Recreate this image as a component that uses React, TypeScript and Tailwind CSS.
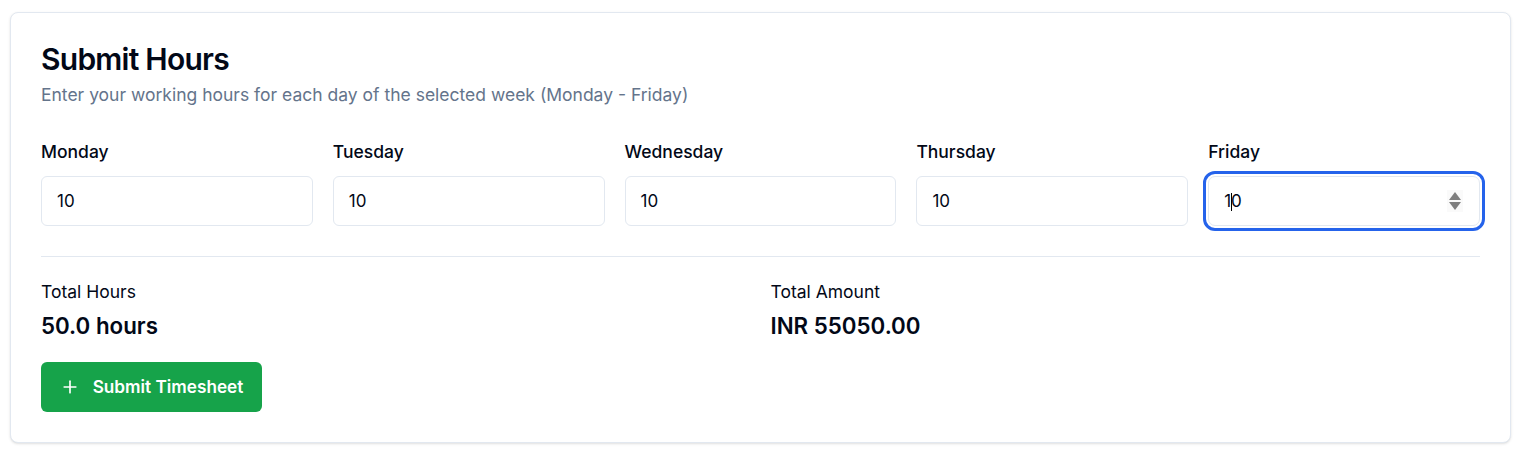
import React from "react";

const days = ["Monday", "Tuesday", "Wednesday", "Thursday", "Friday"];

export default function App() {
  return (
    <div className="min-h-screen bg-white pt-[12px] pl-[10px]" style={{ fontFamily: "Inter, 'Noto Sans', sans-serif" }}>
      <div className="w-[1501px] rounded-lg border border-[#e2e8f0] bg-white px-[30px] pt-[28px] pb-[30px] shadow-sm">
        <h1 className="text-[30px] font-semibold leading-[36px] tracking-[-0.75px] text-[#020817]">Submit Hours</h1>
        <p className="mt-[6px] text-[17.5px] leading-[24px] text-[#64748b]">
          Enter your working hours for each day of the selected week (Monday - Friday)
        </p>
        <div className="mt-[33px] grid grid-cols-5 gap-[20px]">
          {days.map((d) => {
            const focused = d === "Friday";
            return (
              <div key={d} className="flex flex-col gap-[12px]">
                <label className="text-[17.5px] font-medium leading-[24px] text-[#020817]">{d}</label>
                <div
                  className={
                    focused
                      ? "flex h-[50px] items-center rounded-[7px] border border-[#e2e8f0] pl-[15px] pr-[16px] pt-[2px] outline outline-[3px] outline-offset-[2px] outline-[#2563eb]"
                      : "flex h-[50px] items-center rounded-md border border-[#e2e8f0] px-[15px] pt-[2px]"
                  }
                >
                  {focused ? (
                    <>
                      <span className="text-[17px] text-[#020817]">1</span>
                      <span className="mx-[-0.5px] h-[18px] w-px bg-black" />
                      <span className="text-[17px] text-[#020817]">0</span>
                      <span className="flex-1" />
                      <svg width="16" height="22" viewBox="0 0 16 22" className="-mt-[2px] bg-[#fafafa]">
                        <path d="M8 2 L14 10 H2 Z" fill="#7f7f7f" />
                        <path d="M8 20 L14 12 H2 Z" fill="#7f7f7f" />
                      </svg>
                    </>
                  ) : (
                    <span className="text-[17px] text-[#020817]">10</span>
                  )}
                </div>
              </div>
            );
          })}
        </div>
        <div className="mt-[30px] h-px bg-[#e2e8f0]" />
        <div className="mt-[23px] grid grid-cols-2 gap-[20px]">
          <div>
            <div className="text-[17.5px] leading-[24px] text-[#020817]">Total Hours</div>
            <div className="mt-[8px] text-[22.3px] font-semibold leading-[28px] text-[#020817]">50.0 hours</div>
          </div>
          <div>
            <div className="text-[17.5px] leading-[24px] text-[#020817]">Total Amount</div>
            <div className="mt-[8px] text-[22.3px] font-semibold leading-[28px] text-[#020817]">INR 55050.00</div>
          </div>
        </div>
        <button className="mt-[22px] flex h-[50px] w-[221px] items-center justify-center gap-[13px] rounded-md bg-[#16a34a] text-[17.2px] font-semibold text-white">
          <svg width="20" height="20" viewBox="0 0 24 24" fill="none" stroke="white" strokeWidth="2" strokeLinecap="round">
            <path d="M5 12h14" />
            <path d="M12 5v14" />
          </svg>
          Submit Timesheet
        </button>
      </div>
    </div>
  );
}
